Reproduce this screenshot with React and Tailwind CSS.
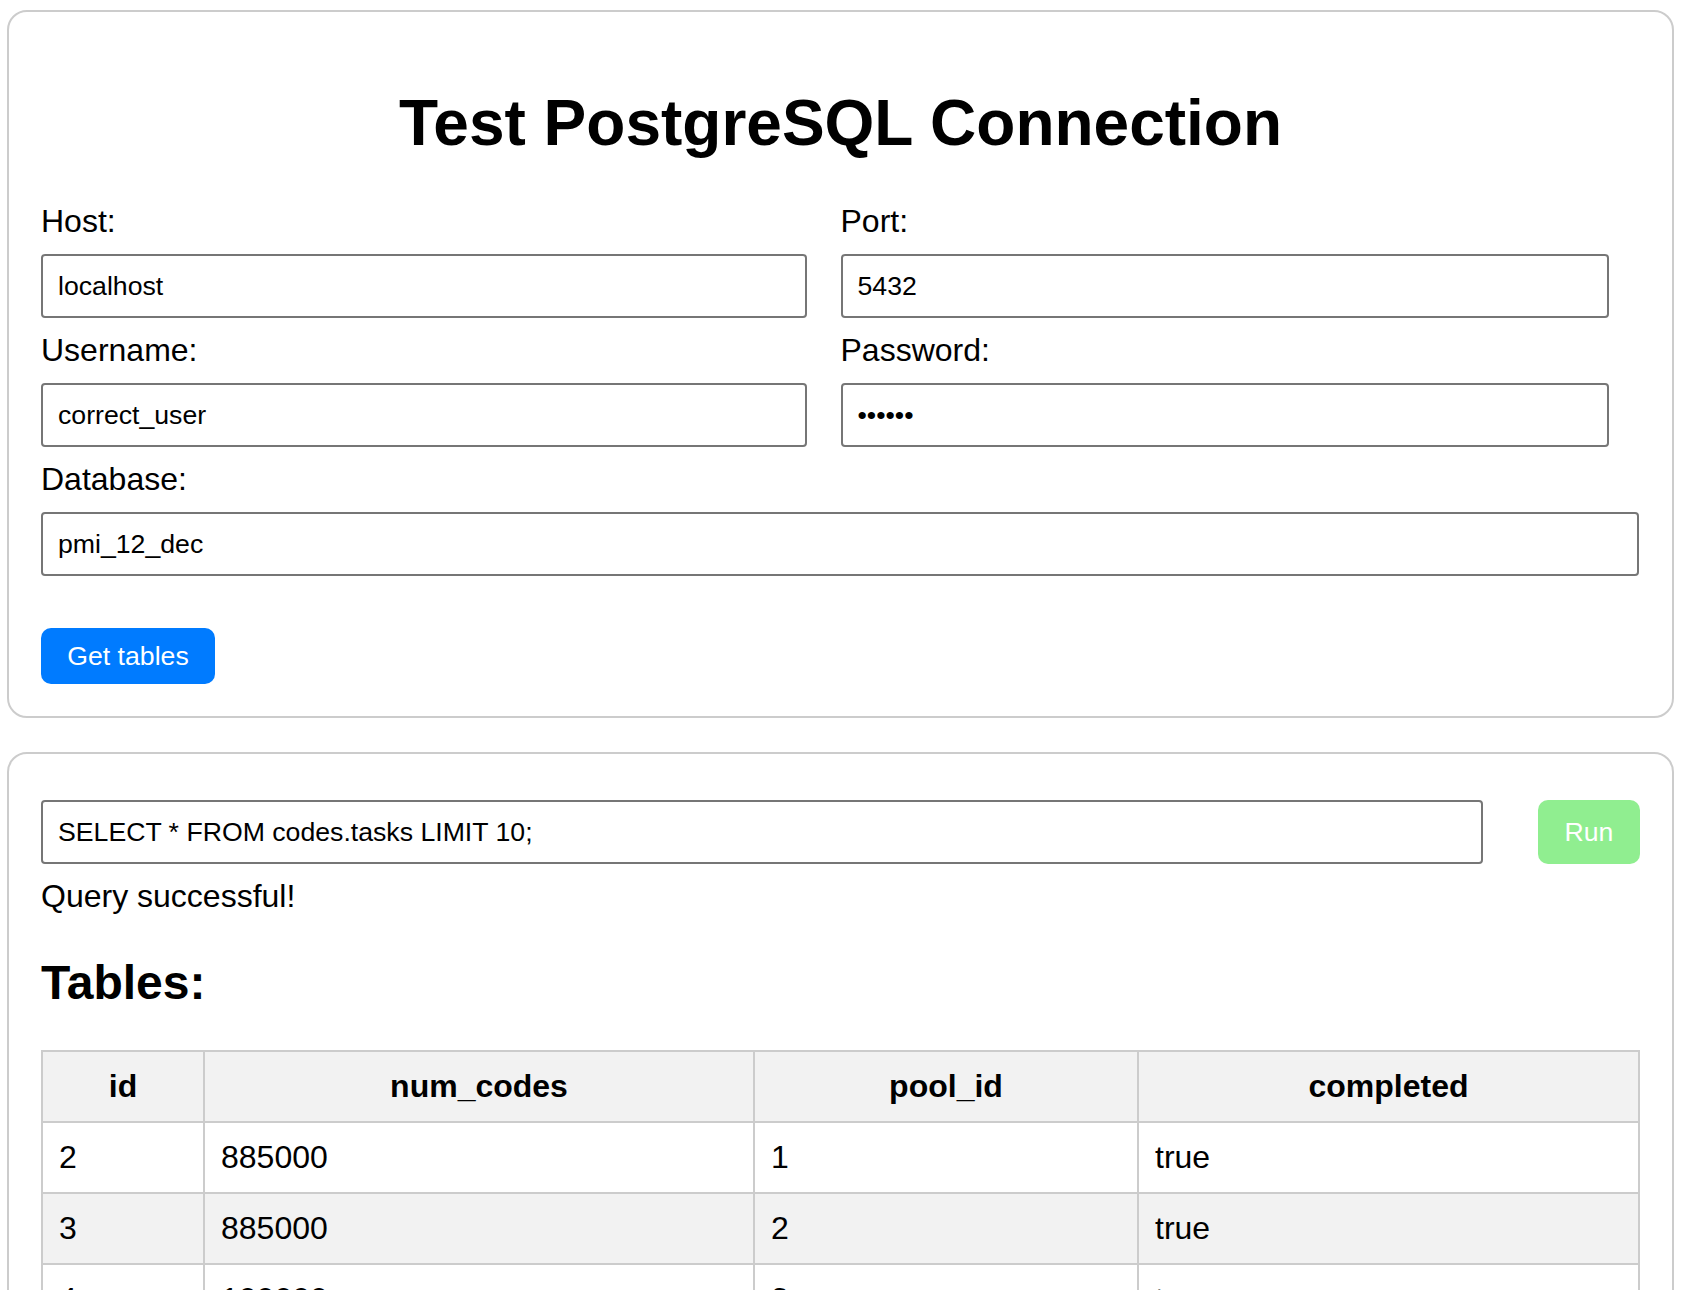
import React from "react";

function Field({ label, value, type = "text", inputClass = "w-full" }) {
  return (
    <div className="flex flex-col">
      <label className="block text-[32px] leading-[normal]">{label}</label>
      <input
        type={type}
        defaultValue={value}
        readOnly
        className={`mt-[14px] h-[64px] border-2 border-[#767676] rounded-[4px] px-[15px] text-[26.67px] leading-[normal] text-black bg-white outline-none ${inputClass}`}
      />
    </div>
  );
}

const rows = [
  ["2", "885000", "1", "true"],
  ["3", "885000", "2", "true"],
  ["4", "100000", "3", "true"],
];

export default function App() {
  return (
    <div className="min-h-screen bg-white text-black font-['Liberation_Sans',Arial,sans-serif] leading-[normal] pt-[10px] pl-[7px]">
      <div className="w-[1667px] border-2 border-[#cccccc] rounded-[20px] p-[32px]">
        <h1 className="text-[64px] font-bold text-center leading-[normal] mt-[42px] mb-[43px]">
          Test PostgreSQL Connection
        </h1>
        <div className="grid grid-cols-2 gap-y-[14px]">
          <Field label="Host:" value="localhost" inputClass="w-[766px]" />
          <Field label="Port:" value="5432" inputClass="w-[768px]" />
          <Field label="Username:" value="correct_user" inputClass="w-[766px]" />
          <Field label="Password:" value="secret" type="password" inputClass="w-[768px]" />
        </div>
        <div className="mt-[14px]">
          <Field label="Database:" value="pmi_12_dec" inputClass="w-[1598px]" />
        </div>
        <button className="mt-[52px] h-[56px] w-[174px] rounded-[10px] bg-[#007bff] text-white text-[26.67px] leading-[normal]">
          Get tables
        </button>
      </div>

      <div className="mt-[34px] w-[1667px] border-2 border-[#cccccc] rounded-[20px] p-[32px]">
        <div className="mt-[14px] flex items-stretch justify-between w-[1599px]">
          <input
            type="text"
            defaultValue="SELECT * FROM codes.tasks LIMIT 10;"
            readOnly
            className="w-[1442px] h-[64px] border-2 border-[#767676] rounded-[4px] px-[15px] text-[26.67px] leading-[normal] text-black bg-white outline-none"
          />
          <button className="w-[102px] h-[64px] rounded-[10px] bg-[#90ee90] text-white text-[26.67px] leading-[normal]">
            Run
          </button>
        </div>
        <div className="mt-[14px] text-[32px] leading-[normal]">Query successful!</div>
        <h2 className="text-[48px] font-bold leading-[normal] mt-[40px] mb-[40px]">Tables:</h2>
        <table className="w-[1597px] table-fixed border-collapse border-2 border-[#cccccc] text-[32px] leading-[normal]">
          <colgroup>
            <col className="w-[162px]" />
            <col className="w-[550px]" />
            <col className="w-[384px]" />
            <col className="w-[501px]" />
          </colgroup>
          <thead>
            <tr className="bg-[#f2f2f2]">
              {["id", "num_codes", "pool_id", "completed"].map((h) => (
                <th key={h} className="border-2 border-[#cccccc] p-[16px] font-bold text-center">
                  {h}
                </th>
              ))}
            </tr>
          </thead>
          <tbody>
            {rows.map((r, i) => (
              <tr key={i} className={i % 2 === 1 ? "bg-[#f2f2f2]" : "bg-white"}>
                {r.map((c, j) => (
                  <td key={j} className="border-2 border-[#cccccc] p-[16px] text-left">
                    {c}
                  </td>
                ))}
              </tr>
            ))}
          </tbody>
        </table>
      </div>
    </div>
  );
}
